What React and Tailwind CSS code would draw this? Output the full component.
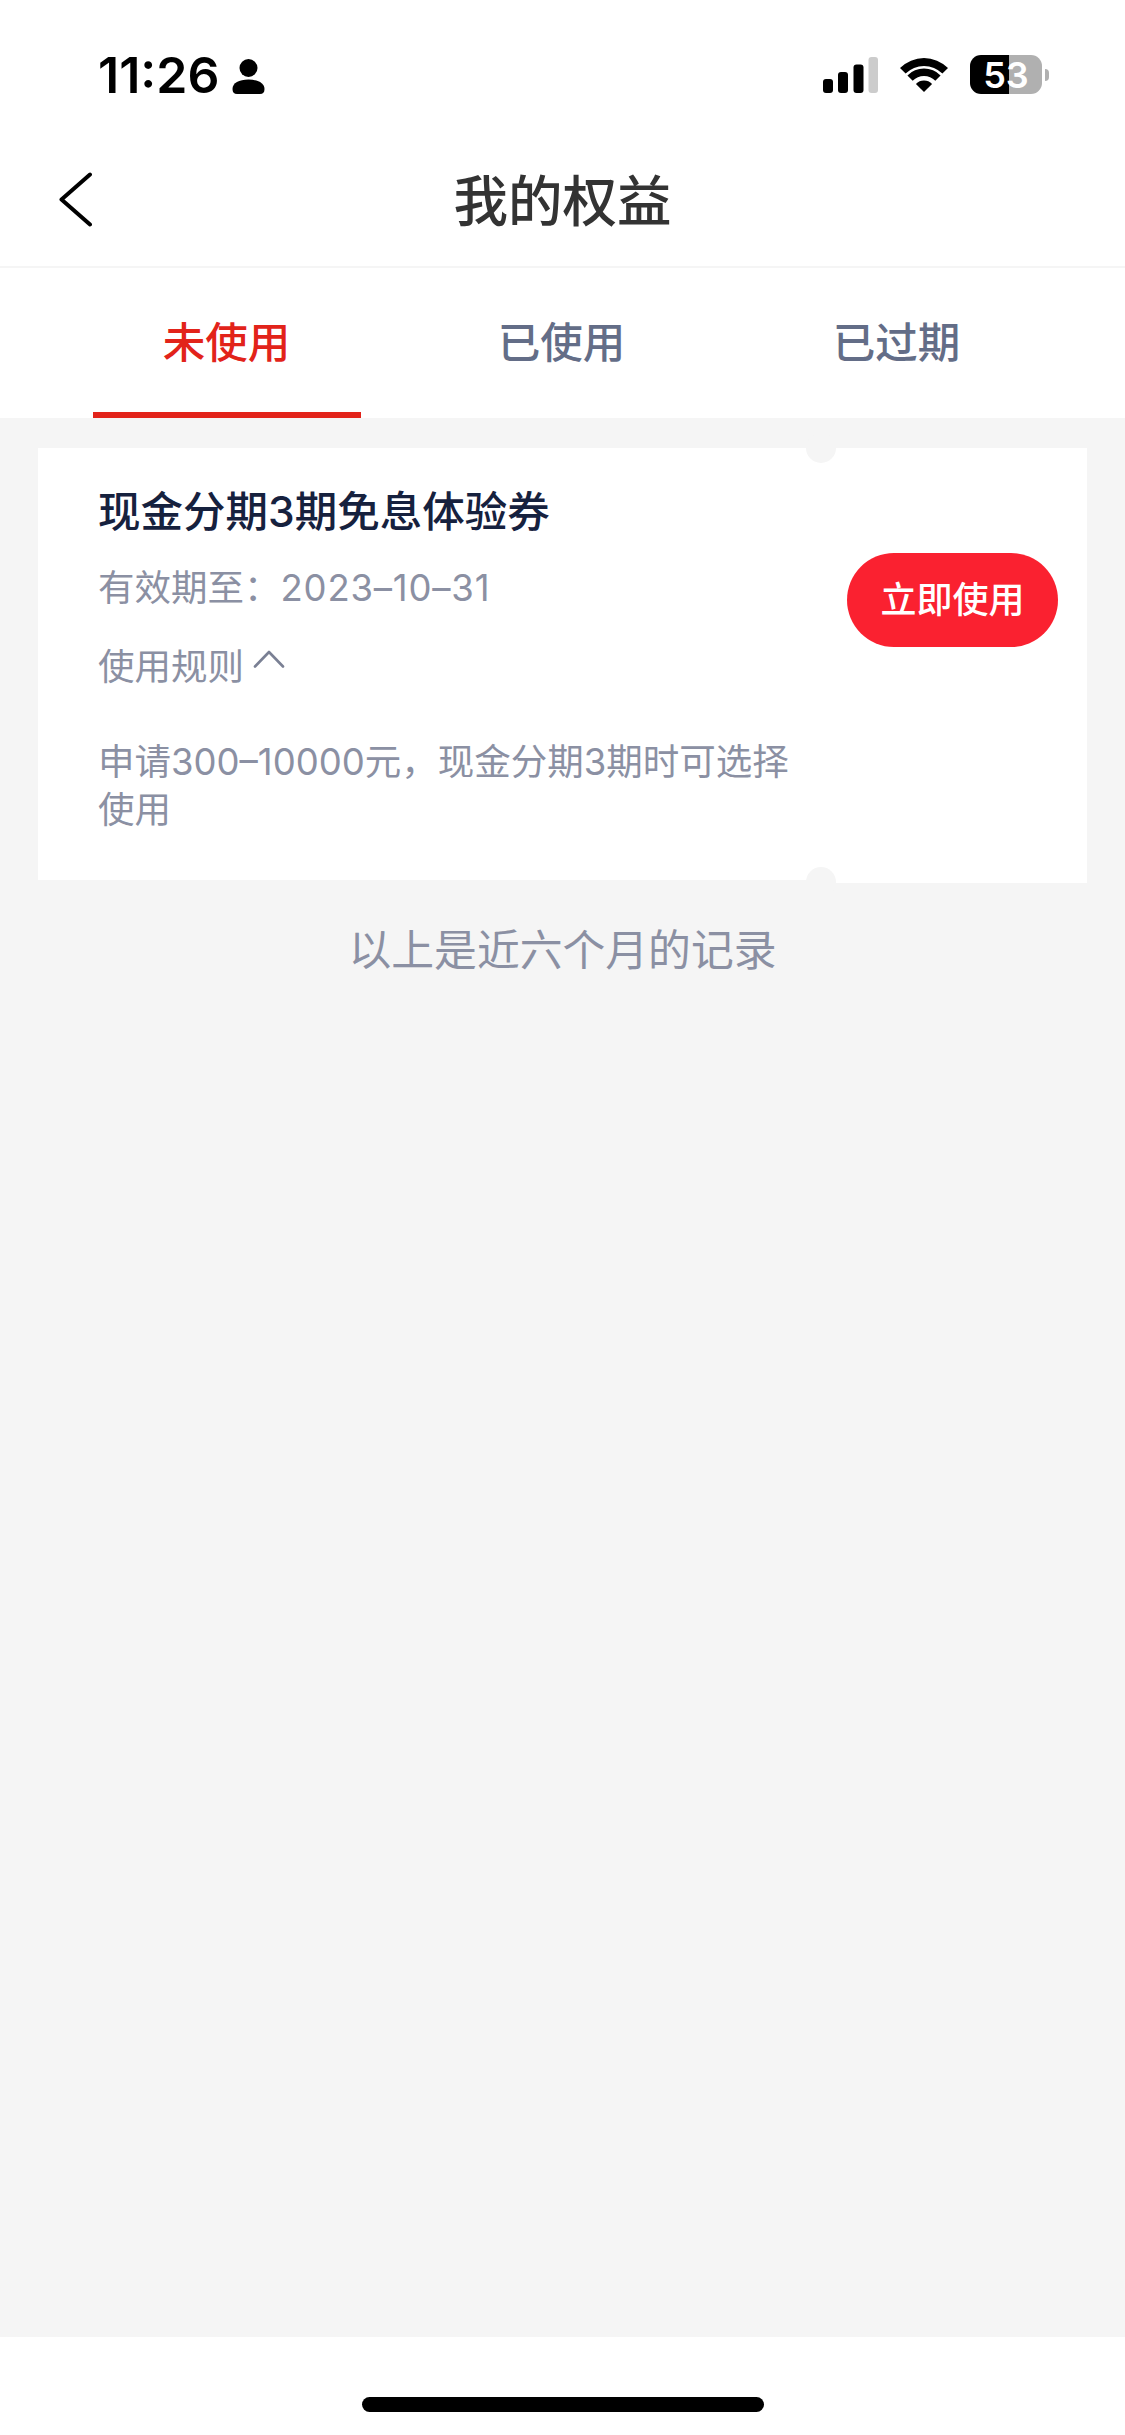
import React from 'react'

const tabs = ['未使用', '已使用', '已过期']

function StatusBar() {
  return (
    <div className="h-[110px] flex justify-between items-start pt-[55px] pl-[98px] pr-[76px] bg-white">
      <div className="flex items-center">
        <span className="font-['Inter',sans-serif] text-[50px] leading-[40px] font-semibold text-black">11:26</span>
        <svg className="ml-[13px] mt-[2px]" width="33" height="35" viewBox="0 0 33 35" fill="#000">
          <circle cx="16.5" cy="9" r="9" />
          <path d="M0.5 30C0.5 24 7 20.5 16.5 20.5S32.5 24 32.5 30C32.5 33.5 31 35 28 35H5C2 35 0.5 33.5 0.5 30Z" />
        </svg>
      </div>
      <div className="flex items-start">
        <svg className="mt-[2px]" width="55" height="36" viewBox="0 0 55 36">
          <rect x="0" y="22" width="10" height="14" rx="3" fill="#000" />
          <rect x="15" y="15" width="10" height="21" rx="3" fill="#000" />
          <rect x="30.5" y="7.5" width="10" height="28.5" rx="3" fill="#000" />
          <rect x="45.500" y="0" width="9.500" height="36" rx="3" fill="#cccccc" />
        </svg>
        <svg className="ml-[22px] mt-[2px]" width="48" height="35" viewBox="0 0 48 35" fill="#000">
          <path d="M0 11A34 34 0 0 1 48 11L42.400 16.600A26 26 0 0 0 5.600 16.600Z" />
          <path d="M7.400 18.400A23.500 23.500 0 0 1 40.600 18.400L35.300 23.700A16 16 0 0 0 12.700 23.700Z" />
          <path d="M15.900 26.900A11.500 11.500 0 0 1 32.100 26.900L24 35Z" />
        </svg>
        <div className="ml-[22px] flex items-center">
          <div className="relative w-[72px] h-[39px]">
            <div className="w-full h-full rounded-[11px] overflow-hidden flex">
              <div className="w-[39px] bg-black" />
              <div className="flex-1 bg-[#b0b0b0]" />
            </div>
            <span className="absolute inset-0 flex items-center justify-center font-['Inter',sans-serif] text-[36px] leading-[36px] font-semibold text-white">53</span>
          </div>
          <div className="ml-[3px] w-[4px] h-[12px] rounded-r-full bg-[#b0b0b0]" />
        </div>
      </div>
    </div>
  )
}

function NavBar() {
  return (
    <div className="relative h-[158px] flex items-center justify-center bg-white border-b-2 border-[#f5f5f5]">
      <svg className="absolute left-[59px] top-[62px]" width="33" height="55" viewBox="0 0 33 55" fill="none" stroke="#000" strokeWidth="4" strokeLinecap="round" strokeLinejoin="round">
        <path d="M31 2.500L2.500 27.500L31 52.500" />
      </svg>
      <h1 className="text-[54.5px] leading-[64px] font-medium text-[#333333] mt-[26px]">我的权益</h1>
    </div>
  )
}

function Tabs() {
  return (
    <div className="h-[150px] grid grid-cols-3 pl-[59px] pr-[61px] bg-white">
      {tabs.map((tab, i) => (
        <div key={tab} className="flex flex-col items-center">
          <div className={`flex-1 flex items-center justify-center pt-[5px] text-[42.5px] font-medium ${i === 0 ? 'text-[#e2231a]' : 'text-[#636d87]'}`}>
            {tab}
          </div>
          <div className={`w-[268px] h-[6px] ${i === 0 ? 'bg-[#e2231a]' : 'bg-transparent'}`} />
        </div>
      ))}
    </div>
  )
}

function Coupon() {
  return (
    <div className="relative flex items-start">
      <div className="w-[783px] h-[432px] bg-white pl-[60px] pt-[40px]">
        <p className="text-[42.5px] leading-[48px] font-medium text-[#16213e]">现金分期3期免息体验券</p>
        <p className="mt-[28px] text-[36.5px] leading-[48px] text-[#8b90a3]">
          有效期至：<span className="tracking-[0.8px]">2023–10–31</span>
        </p>
        <div className="mt-[31px] flex items-start">
          <span className="text-[36.5px] leading-[48px] text-[#8b90a3]">使用规则</span>
          <svg className="ml-[9px] mt-[7px]" width="32" height="18" viewBox="0 0 32 18" fill="none" stroke="#7a8094" strokeWidth="2.600" strokeLinecap="round" strokeLinejoin="round">
            <path d="M2 16.500L16 2L30 16.500" />
          </svg>
        </div>
        <p className="mt-[47px] w-[705px] text-[36.5px] leading-[48px] text-[#8b90a3]">申请300–10000元，现金分期3期时可选择使用</p>
      </div>
      <div className="flex-1 h-[435px] bg-white pl-[26px] pt-[105px]">
        <button type="button" className="w-[211px] h-[94px] rounded-full bg-[#fa2130] text-[36px] font-medium text-white">
          立即使用
        </button>
      </div>
      <div className="absolute left-[768px] -top-[15px] w-[30px] h-[30px] rounded-full bg-[#f5f5f5]" />
      <div className="absolute left-[768px] top-[419px] w-[30px] h-[30px] rounded-full bg-[#f5f5f5]" />
    </div>
  )
}

export default function App() {
  return (
    <div lang="zh-CN" className="w-[1125px] h-[2435px] flex flex-col bg-white font-['Inter','Noto_Sans_CJK_SC',sans-serif]">
      <StatusBar />
      <NavBar />
      <Tabs />
      <main className="flex-1 bg-[#f5f5f5] pl-[38px] pr-[38px] pt-[30px]">
        <Coupon />
        <p className="mt-[40px] text-center text-[42.8px] leading-[56px] text-[#8b90a3]">以上是近六个月的记录</p>
      </main>
      <div className="h-[98px] bg-white flex justify-center pt-[60px]">
        <div className="w-[402px] h-[15px] rounded-full bg-black" />
      </div>
    </div>
  )
}
